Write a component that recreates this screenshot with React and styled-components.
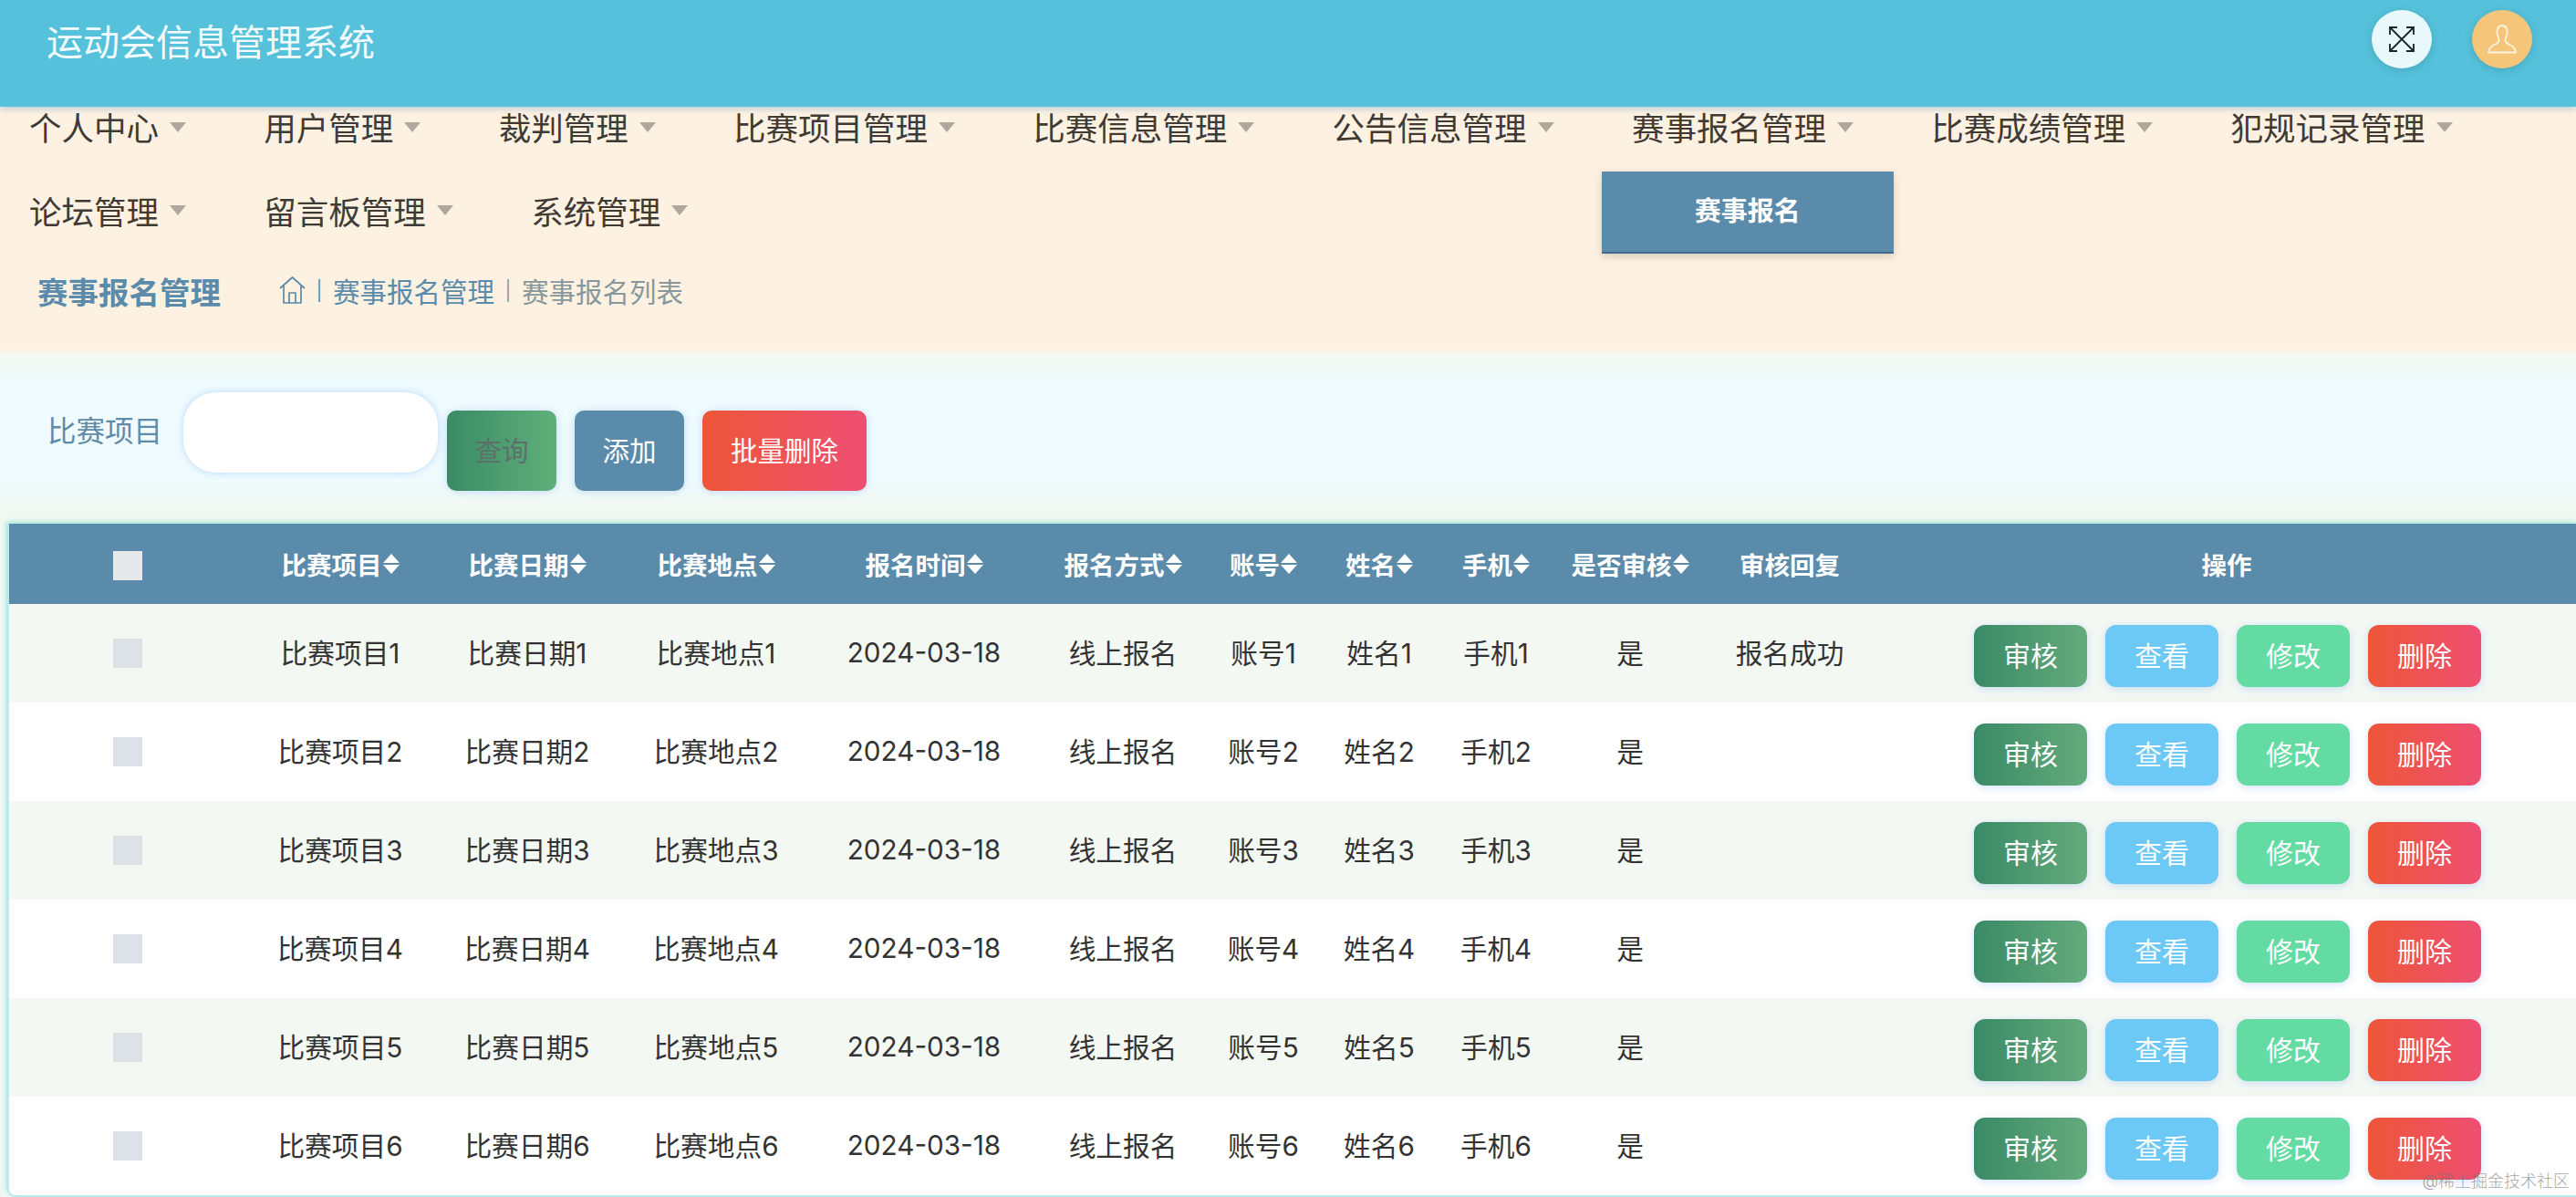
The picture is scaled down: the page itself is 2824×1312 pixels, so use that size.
import React from 'react';
import styled, { createGlobalStyle } from 'styled-components';

const Global = createGlobalStyle`
  html, body {
    margin: 0;
    padding: 0;
    height: 1312px;
    overflow: hidden;
    background: #eef8f4;
    font-family: Inter, "Noto Sans CJK SC", "Noto Sans", sans-serif;
  }
  * { box-sizing: border-box; }
`;

const MENUS = [
  '个人中心', '用户管理', '裁判管理', '比赛项目管理', '比赛信息管理', '公告信息管理', '赛事报名管理',
  '比赛成绩管理', '犯规记录管理', '论坛管理', '留言板管理', '系统管理'
];
const COL_WIDTHS = [260, 206, 204, 210, 246, 190, 118, 136, 120, 174, 176, 774];
const HEADS = [
  ['比赛项目', true], ['比赛日期', true], ['比赛地点', true], ['报名时间', true], ['报名方式', true],
  ['账号', true], ['姓名', true], ['手机', true], ['是否审核', true], ['审核回复', false], ['操作', false]
];
const ROWS = [1, 2, 3, 4, 5, 6];

const Page = styled.div`
  position: relative;
  width: 2824px;
  height: 1312px;
  overflow: hidden;
`;

const Header = styled.header`
  position: relative;
  z-index: 2;
  height: 117px;
  display: flex;
  justify-content: space-between;
  align-items: flex-start;
  padding: 11px 48px 0 51px;
  background: #56c1da;
  box-shadow: 0 3px 6px rgba(120, 170, 210, 0.45);
`;

const Title = styled.h1`
  margin: 0;
  font-size: 40px;
  line-height: 72px;
  font-weight: 400;
  color: #f2fbfd;
`;

const HeaderActions = styled.div`
  display: flex;
  gap: 44px;
`;

const RoundBtn = styled.div`
  width: 66px;
  height: 64px;
  border-radius: 50%;
  display: flex;
  align-items: center;
  justify-content: center;
  background: ${({ $bg }) => $bg};
  box-shadow: 0 2px 8px rgba(40, 110, 130, 0.3);
`;

const Nav = styled.nav`
  display: flex;
  flex-wrap: wrap;
  row-gap: 44px;
  height: 141px;
  padding: 2px 0 0 32px;
  background: #fdf1e2;
  box-shadow: 0 2px 4px rgba(120, 100, 80, 0.06);
`;

const NavItem = styled.div`
  position: relative;
  display: flex;
  align-items: center;
  height: 46px;
  margin-right: 85.3px;
  font-size: 35.5px;
  line-height: 46px;
  color: #3f3a34;
`;

const Caret = styled.i`
  width: 0;
  height: 0;
  margin-left: 12px;
  border-left: 9px solid transparent;
  border-right: 9px solid transparent;
  border-top: 11px solid #b0a89c;
  transform: translateY(-3px);
`;

const Dropdown = styled.div`
  position: absolute;
  top: 69px;
  left: -33px;
  width: 320px;
  height: 90px;
  display: flex;
  align-items: center;
  justify-content: center;
  font-size: 29px;
  font-weight: 700;
  color: #fff;
  background: #5b8bab;
  border-bottom: 2px solid #3f6a8a;
  box-shadow: 0 3px 8px rgba(90, 80, 60, 0.25);
  z-index: 3;
`;

const Crumbs = styled.div`
  height: 124px;
  display: flex;
  align-items: center;
  padding: 0 0 4px 41px;
  background: #fdf1e2;
`;

const CrumbTitle = styled.div`
  width: 265px;
  font-size: 33.5px;
  font-weight: 700;
  color: #5b8bab;
`;

const CrumbSep = styled.span`
  margin: 0 11.5px;
  font-size: 21px;
  color: ${({ $muted }) => ($muted ? '#8a9a9e' : '#5b8bab')};
`;

const CrumbLink = styled.span`
  font-size: 29.5px;
  color: #5b8bab;
`;

const CrumbCurrent = styled(CrumbLink)`
  color: #87979b;
`;

const Search = styled.div`
  height: 192px;
  display: flex;
  align-items: flex-start;
  padding: 48px 0 0 52px;
  background: linear-gradient(#fdf1e2 0, #f4f9f3 4%, #effbfe 20%, #effbfe 72%, #f1f8ef 100%);
`;

const SearchLabel = styled.label`
  width: 149px;
  font-size: 31.5px;
  line-height: 86px;
  color: #5f8ba8;
`;

const SearchInput = styled.input`
  width: 279px;
  height: 88px;
  padding: 0 24px;
  border: 0;
  outline: 0;
  border-radius: 36px;
  background: #fff;
  box-shadow: 0 0 8px rgba(110, 160, 240, 0.4);
`;

const ToolBtn = styled.button`
  width: ${({ $w }) => $w}px;
  height: 88px;
  margin: 20px 0 0 ${({ $gap }) => $gap}px;
  padding: 0 0 5px;
  border: 0;
  border-radius: 10px;
  font-family: inherit;
  font-size: 29.5px;
  color: ${({ $color }) => $color || '#fff'};
  background: ${({ $bg }) => $bg};
  box-shadow: 0 1px 8px rgba(110, 160, 240, 0.35);
`;

const TableWrap = styled.div`
  height: 738px;
  margin-left: 7px;
  border-left: 3px solid #b7ecea;
  border-bottom: 2px solid #b7ecea;
  border-bottom-left-radius: 10px;
  overflow: hidden;
  box-shadow: 0 -2px 5px rgba(130, 225, 205, 0.7);
`;

const Table = styled.table`
  width: 2814px;
  table-layout: fixed;
  border-collapse: collapse;
`;

const HeadRow = styled.tr`
  height: 88px;
  background: #5b8bab;
`;

const Th = styled.th`
  padding: 0;
  font-size: 27.5px;
  font-weight: 700;
  color: #fff;
  text-align: center;
  white-space: nowrap;
`;

const LastTh = styled(Th)`
  padding-left: 8px;
`;

const HeadInner = styled.span`
  display: inline-flex;
  align-items: center;
  gap: 1px;
`;

const Sort = styled.span`
  display: inline-flex;
  flex-direction: column;
  gap: 2px;
`;

const SortUp = styled.i`
  width: 0;
  height: 0;
  border-left: 9px solid transparent;
  border-right: 9px solid transparent;
  border-bottom: 10px solid #fff;
`;

const SortDown = styled(SortUp)`
  border-bottom: 0;
  border-top: 10px solid #fff;
`;

const Row = styled.tr`
  height: 108px;
  background: ${({ $odd }) => ($odd ? '#f3f8f3' : '#fff')};
`;

const Td = styled.td`
  padding: 0 0 3px;
  font-size: 29.7px;
  color: #333;
  text-align: center;
  white-space: nowrap;
`;

const ActionCell = styled(Td)`
  padding: 6px 0 0 10px;
`;

const Check = styled.input.attrs({ type: 'checkbox' })`
  appearance: none;
  display: block;
  width: 32px;
  height: 32px;
  margin: 3px auto 0;
  background: ${({ $head }) => ($head ? '#e6e8ec' : '#dde2e8')};
`;

const Actions = styled.div`
  display: flex;
  justify-content: center;
  gap: 20px;
`;

const ActionBtn = styled.button`
  width: 124px;
  height: 68px;
  padding: 0 0 5px;
  border: 0;
  border-radius: 12px;
  font-family: inherit;
  font-size: 30px;
  color: #fff;
  background: ${({ $bg }) => $bg};
  box-shadow: 0 2px 9px rgba(110, 160, 240, 0.3);
`;

const Watermark = styled.div`
  position: absolute;
  right: 7px;
  bottom: 6px;
  font-size: 18px;
  line-height: 22px;
  font-weight: 300;
  color: rgba(110, 110, 110, 0.65);
`;

const GREEN = 'linear-gradient(90deg, #3a8a66, #64ab7c)';
const RED = 'linear-gradient(90deg, #ee5638, #ee4f72)';

const ExpandIcon = () => (
  <svg width="32" height="32" viewBox="0 0 32 32" fill="none" stroke="#16262c" strokeWidth="1.8">
    <path d="M3 3 29 29M29 3 3 29" />
    <path d="M3 11V3h8M21 3h8v8M29 21v8h-8M11 29H3v-8" />
  </svg>
);

const UserIcon = () => (
  <svg width="34" height="32" viewBox="0 0 34 32" fill="none" stroke="#fdf3df" strokeWidth="1.8" strokeLinejoin="round">
    <path d="M17 1c-4 0-5.500 3.500-5.500 7.500 0 3.500 1.500 6 2 7.500 .5 2-.5 3.500-3 5-4 2-8 4-8.500 9.500h30c-.5-5.500-4.500-7.500-8.500-9.500-2.500-1.500-3.500-3-3-5 .5-1.500 2-4 2-7.500C22.500 4.500 21 1 17 1z" />
  </svg>
);

const HomeIcon = () => (
  <svg width="29" height="30" viewBox="0 0 29 30" fill="none" stroke="#5b8bab" strokeWidth="1.7" strokeLinejoin="round">
    <path d="M1 13 14.500 1 28 13M5 10v19h19V10" />
    <path d="M11 29V18h7v11" />
  </svg>
);

const App = () => (
  <Page>
    <Global />
    <Header>
      <Title>运动会信息管理系统</Title>
      <HeaderActions>
        <RoundBtn $bg="#e8f8fb"><ExpandIcon /></RoundBtn>
        <RoundBtn $bg="#f5c67a"><UserIcon /></RoundBtn>
      </HeaderActions>
    </Header>
    <Nav>
      {MENUS.map((name, i) => (
        <NavItem key={name}>
          {name}
          <Caret />
          {i === 6 && <Dropdown>赛事报名</Dropdown>}
        </NavItem>
      ))}
    </Nav>
    <Crumbs>
      <CrumbTitle>赛事报名管理</CrumbTitle>
      <HomeIcon />
      <CrumbSep>|</CrumbSep>
      <CrumbLink>赛事报名管理</CrumbLink>
      <CrumbSep $muted>|</CrumbSep>
      <CrumbCurrent>赛事报名列表</CrumbCurrent>
    </Crumbs>
    <Search>
      <SearchLabel>比赛项目</SearchLabel>
      <SearchInput />
      <ToolBtn $w={120} $gap={10} $bg="linear-gradient(90deg, #3a8a66, #60b07a)" $color="#5d6f6a">查询</ToolBtn>
      <ToolBtn $w={120} $gap={20} $bg="#5b8bab">添加</ToolBtn>
      <ToolBtn $w={180} $gap={20} $bg={RED}>批量删除</ToolBtn>
    </Search>
    <TableWrap>
      <Table>
        <colgroup>
          {COL_WIDTHS.map((w, i) => <col key={i} width={w} />)}
        </colgroup>
        <thead>
          <HeadRow>
            <Th><Check $head /></Th>
            {HEADS.map(([label, sortable]) => {
              const Cell = label === '操作' ? LastTh : Th;
              return (
                <Cell key={label}>
                  <HeadInner>
                    {label}
                    {sortable && <Sort><SortUp /><SortDown /></Sort>}
                  </HeadInner>
                </Cell>
              );
            })}
          </HeadRow>
        </thead>
        <tbody>
          {ROWS.map((n) => (
            <Row key={n} $odd={n % 2 === 1}>
              <Td><Check /></Td>
              <Td>比赛项目{n}</Td>
              <Td>比赛日期{n}</Td>
              <Td>比赛地点{n}</Td>
              <Td>2024-03-18</Td>
              <Td>线上报名</Td>
              <Td>账号{n}</Td>
              <Td>姓名{n}</Td>
              <Td>手机{n}</Td>
              <Td>是</Td>
              <Td>{n === 1 ? '报名成功' : ''}</Td>
              <ActionCell>
                <Actions>
                  <ActionBtn $bg={GREEN}>审核</ActionBtn>
                  <ActionBtn $bg="#6cc8f5">查看</ActionBtn>
                  <ActionBtn $bg="#64dba3">修改</ActionBtn>
                  <ActionBtn $bg={RED}>删除</ActionBtn>
                </Actions>
              </ActionCell>
            </Row>
          ))}
        </tbody>
      </Table>
    </TableWrap>
    <Watermark>@稀土掘金技术社区</Watermark>
  </Page>
);

export default App;
